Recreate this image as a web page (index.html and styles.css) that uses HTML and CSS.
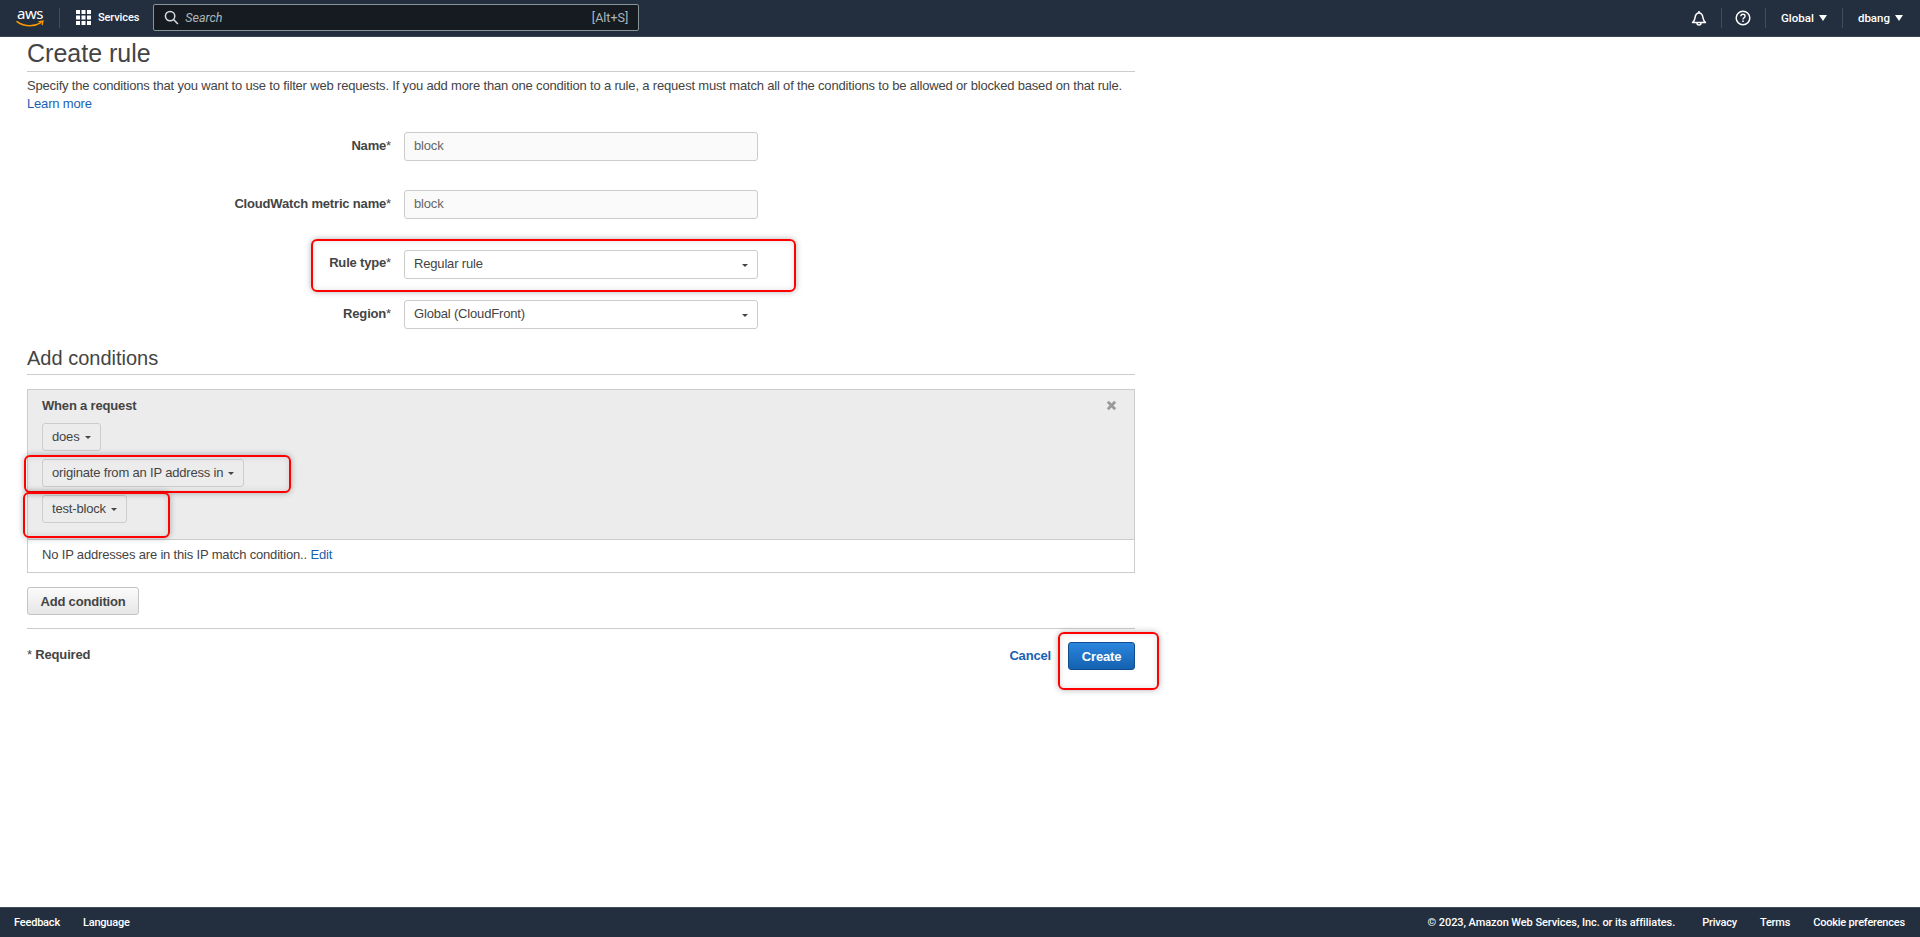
FILE: index.html
```html
<!DOCTYPE html>
<html lang="en">
<head>
<meta charset="utf-8">
<title>Create rule</title>
<link rel="stylesheet" href="styles.css">
</head>
<body>
<header class="topnav">
  <svg class="aws-logo" viewBox="0 -4 30 32" width="30" height="32" aria-label="aws">
    <text x="1" y="13" class="aws-text">aws</text>
    <path d="M1 15.600c4 2.900 8.600 4.200 13 4.200 3.500 0 7.600-1.100 11-3.200" fill="none" stroke="#f90" stroke-width="1.500" stroke-linecap="round"/>
    <path d="M23 15.700l4-.6-.8 3.600" fill="none" stroke="#f90" stroke-width="1.300" stroke-linecap="round"/>
  </svg>
  <span class="nav-sep sep-logo"></span>
  <svg class="grid-icon" viewBox="0 0 15 15" width="15" height="15">
    <path fill="#fff" d="M0 0h4v4H0zM5.500 0h4v4h-4zM11 0h4v4h-4zM0 5.500h4v4H0zM5.500 5.500h4v4h-4zM11 5.500h4v4h-4zM0 11h4v4H0zM5.500 11h4v4h-4zM11 11h4v4h-4z"/>
  </svg>
  <span class="nav-link services">Services</span>
  <div class="search">
    <svg viewBox="0 0 16 16" width="15" height="15" class="search-icon">
      <circle cx="6.500" cy="6.500" r="5" fill="none" stroke="#d5dbdb" stroke-width="1.600"/>
      <path d="M10.200 10.200l4.600 4.800" stroke="#d5dbdb" stroke-width="1.600"/>
    </svg>
    <span class="search-text">Search</span>
    <span class="search-key">[Alt+S]</span>
  </div>
  <div class="nav-right">
    <svg viewBox="0 0 16 16" width="16" height="16" class="nav-icon">
      <path d="M1.500 12.500c1.500-1.200 2.200-2.200 2.500-4.600C4.300 5.200 6 3 8 3s3.700 2.200 4 4.900c.3 2.400 1 3.400 2.500 4.600z" fill="none" stroke="#fff" stroke-width="1.500" stroke-linejoin="round"/>
      <path d="M8 1v2M6 13a2 2 0 0 0 4 0" fill="none" stroke="#fff" stroke-width="1.500"/>
    </svg>
    <span class="nav-sep sep-a"></span>
    <svg viewBox="0 0 16 16" width="16" height="16" class="nav-icon">
      <circle cx="8" cy="8" r="6.800" fill="none" stroke="#fff" stroke-width="1.500"/>
      <path d="M5.900 6.300c0-1.300 1-2 2.100-2s2.100.7 2.100 1.900c0 1.600-2.100 1.600-2.100 3.300" fill="none" stroke="#fff" stroke-width="1.400"/>
      <path d="M7.200 10.600h1.600v1.500H7.200z" fill="#fff"/>
    </svg>
    <span class="nav-sep sep-b"></span>
    <span class="nav-link">Global<i class="nav-caret"></i></span>
    <span class="nav-sep sep-c"></span>
    <span class="nav-link">dbang<i class="nav-caret"></i></span>
  </div>
</header>

<main class="content">
  <h1 class="page-title">Create rule</h1>
  <p class="intro">Specify the conditions that you want to use to filter web requests. If you add more than one condition to a rule, a request must match all of the conditions to be allowed or blocked based on that rule. <a href="#" class="link">Learn more</a></p>

  <div class="form">
    <div class="row row-name"><label class="label">Name<span class="star">*</span></label><div class="field field-input">block</div></div>
    <div class="row row-metric"><label class="label">CloudWatch metric name<span class="star">*</span></label><div class="field field-input">block</div></div>
    <div class="row row-type"><label class="label">Rule type<span class="star">*</span></label><div class="field field-select">Regular rule<i class="caret"></i></div></div>
    <div class="row row-region"><label class="label">Region<span class="star">*</span></label><div class="field field-select">Global (CloudFront)<i class="caret"></i></div></div>
  </div>

  <h2 class="section-title">Add conditions</h2>

  <section class="condition">
    <div class="condition-head">
      <strong class="when">When a request</strong>
      <svg viewBox="0 0 12 12" width="11" height="11" class="close"><path d="M2 2l8 8M10 2l-8 8" stroke="#999" stroke-width="3"/></svg>
      <div class="drop-list">
        <button class="drop">does<i class="caret"></i></button>
        <button class="drop">originate from an IP address in<i class="caret"></i></button>
        <button class="drop">test-block<i class="caret"></i></button>
      </div>
    </div>
    <div class="condition-foot">No IP addresses are in this IP match condition.. <a href="#" class="link">Edit</a></div>
  </section>

  <button class="add-btn">Add condition</button>

  <div class="actions">
    <span class="required"><span class="star">*</span> Required</span>
    <a href="#" class="link cancel">Cancel</a>
    <button class="create-btn">Create</button>
  </div>
</main>

<footer class="footer">
  <span class="foot-link">Feedback</span>
  <span class="foot-link">Language</span>
  <span class="copyright">© 2023, Amazon Web Services, Inc. or its affiliates.</span>
  <span class="foot-link">Privacy</span>
  <span class="foot-link">Terms</span>
  <span class="foot-link">Cookie preferences</span>
</footer>

<div class="mark mark-type"></div>
<div class="mark mark-origin"></div>
<div class="mark mark-block"></div>
<div class="mark mark-create"></div>
</body>
</html>
```

FILE: styles.css
```css
* { box-sizing: border-box; }
html, body { margin: 0; height: 937px; overflow: hidden; }
body {
  position: relative;
  display: flex;
  flex-direction: column;
  background: #fff;
  color: #444;
  font: 13px/18px "Liberation Sans", Arial, sans-serif;
  letter-spacing: -.175px;
}
a { text-decoration: none; }
.link { color: #1a5fb4; }
.star { font-weight: 400; }

/* top navigation */
.topnav {
  height: 37px;
  flex: none;
  display: flex;
  align-items: center;
  padding: 0 17px 1px 16px;
  background: #232f3e;
  border-bottom: 1px solid #3b4654;
  color: #fff;
  font: 11.500px/16px Roboto, sans-serif;
  letter-spacing: 0;
}
.aws-logo { flex: none; }
.aws-text { font: 15px "Noto Sans", sans-serif; fill: #fff; letter-spacing: -.5px; }
.nav-sep { width: 1px; height: 20px; background: #414d5c; flex: none; }
.sep-logo { margin: 0 16px 0 13px; }
.grid-icon { flex: none; margin-right: 7px; }
.nav-link { font-weight: 500; white-space: nowrap; }
.services { margin-right: 14px; font-size: 11px; letter-spacing: -.1px; }
.search {
  width: 486px;
  height: 27px;
  flex: none;
  display: flex;
  align-items: center;
  padding: 0 10px 0 10px;
  background: #161b22;
  border: 1px solid #879596;
  border-radius: 2px;
  color: #aab7b8;
  font-size: 12.500px;
}
.search-icon { flex: none; margin-right: 6px; }
.search-text { font-style: italic; flex: 1; }
.nav-right { margin-left: auto; display: flex; align-items: center; }
.nav-icon { flex: none; }
.sep-a { margin: 0 13px 0 14px; }
.sep-b { margin: 0 15px 0 14px; }
.sep-c { margin: 0 15px 0 15px; }
.nav-caret {
  display: inline-block;
  margin-left: 5px;
  vertical-align: 1px;
  border: 4px solid transparent;
  border-top: 6px solid #fff;
  border-bottom: 0;
}

/* page */
.content { flex: 1; width: 1108px; margin-left: 27px; }
.page-title {
  margin: 0;
  height: 35px;
  font-size: 25px;
  line-height: 32px;
  font-weight: 400;
  letter-spacing: 0;
  border-bottom: 1px solid #ccc;
}
.intro { margin: 5px 0 0; height: 36px; }

.form { margin-top: 19px; }
.row { display: flex; align-items: flex-start; }
.label {
  width: 364px;
  margin-right: 13px;
  text-align: right;
  font-weight: 700;
  line-height: 28px;
  flex: none;
}
.field {
  width: 354px;
  height: 29px;
  padding: 0 9px;
  border: 1px solid #ccc;
  border-radius: 3px;
  line-height: 25px;
  position: relative;
  flex: none;
}
.field-input { background: #fafafa; color: #666; line-height: 26px; }
.row-metric { margin-top: 29px; }
.row-type { margin-top: 31px; }
.row-type .label { line-height: 26px; }
.row-region { margin-top: 21px; }

.caret {
  display: inline-block;
  border: 3px solid transparent;
  border-top: 3.500px solid #444;
  border-bottom: 0;
}
.field-select .caret { position: absolute; right: 9px; top: 13px; }
.drop .caret { margin-left: 5px; vertical-align: 2px; }

.section-title {
  margin: 13px 0 0;
  height: 33px;
  font-size: 20px;
  line-height: 33px;
  font-weight: 400;
  letter-spacing: 0;
  border-bottom: 1px solid #ccc;
}

.condition { margin-top: 14px; border: 1px solid #ccc; }
.condition-head {
  position: relative;
  height: 150px;
  padding: 6px 14px 0;
  background: #ececec;
  border-bottom: 1px solid #ccc;
}
.when { display: block; line-height: 20px; }
.close { position: absolute; right: 17px; top: 10px; }
.drop-list { display: flex; flex-direction: column; align-items: flex-start; gap: 8px; margin-top: 7px; }
.drop {
  height: 28px;
  padding: 0 9px 2px;
  background: #ececec;
  border: 1px solid #ccc;
  border-radius: 3px;
  color: #444;
  font: 13px "Liberation Sans", Arial, sans-serif;
  letter-spacing: -.175px;
}
.condition-foot { height: 32px; padding: 4px 14px 0; line-height: 22px; }

.add-btn {
  display: block;
  margin-top: 14px;
  width: 112px;
  height: 28px;
  padding: 0;
  background: linear-gradient(#fbfbfb, #e6e6e6);
  border: 1px solid #c4c4c4;
  border-radius: 3px;
  color: #444;
  font: 700 13px "Liberation Sans", Arial, sans-serif;
  letter-spacing: -.175px;
}

.actions {
  display: flex;
  align-items: flex-start;
  margin-top: 13px;
  padding-top: 13px;
  border-top: 1px solid #ccc;
}
.required { flex: 1; font-weight: 700; padding-top: 4px; line-height: 18px; }
.cancel { font-weight: 700; margin-right: 17px; padding-top: 5px; line-height: 18px; }
.create-btn {
  width: 67px;
  height: 28px;
  padding: 0;
  background: linear-gradient(#2b86de, #1461b0);
  border: 1px solid #0f4d8f;
  border-radius: 3px;
  color: #fff;
  font: 700 13px "Liberation Sans", Arial, sans-serif;
  letter-spacing: -.175px;
}

/* footer */
.footer {
  height: 30px;
  flex: none;
  display: flex;
  align-items: center;
  padding: 0 15px 0 14px;
  background: #232f3e;
  border-top: 1px solid #414d5c;
  color: #fff;
  font: 11px/16px Roboto, sans-serif;
  letter-spacing: -.2px;
  gap: 23px;
}
.foot-link { font-weight: 500; }
.copyright { margin-left: auto; margin-right: 4px; font-weight: 500; letter-spacing: -.07px; }

/* red annotations drawn over the page */
.mark {
  position: absolute;
  border: 2px solid #f00;
  border-radius: 6px;
  box-shadow: 0 0 6px rgba(0,0,0,.3), inset 0 0 6px rgba(0,0,0,.12);
}
.mark-type { left: 311px; top: 239px; width: 485px; height: 53px; }
.mark-origin { left: 24px; top: 455px; width: 267px; height: 38px; }
.mark-block { left: 23px; top: 492px; width: 147px; height: 46px; }
.mark-create { left: 1058px; top: 632px; width: 101px; height: 58px; }
```
